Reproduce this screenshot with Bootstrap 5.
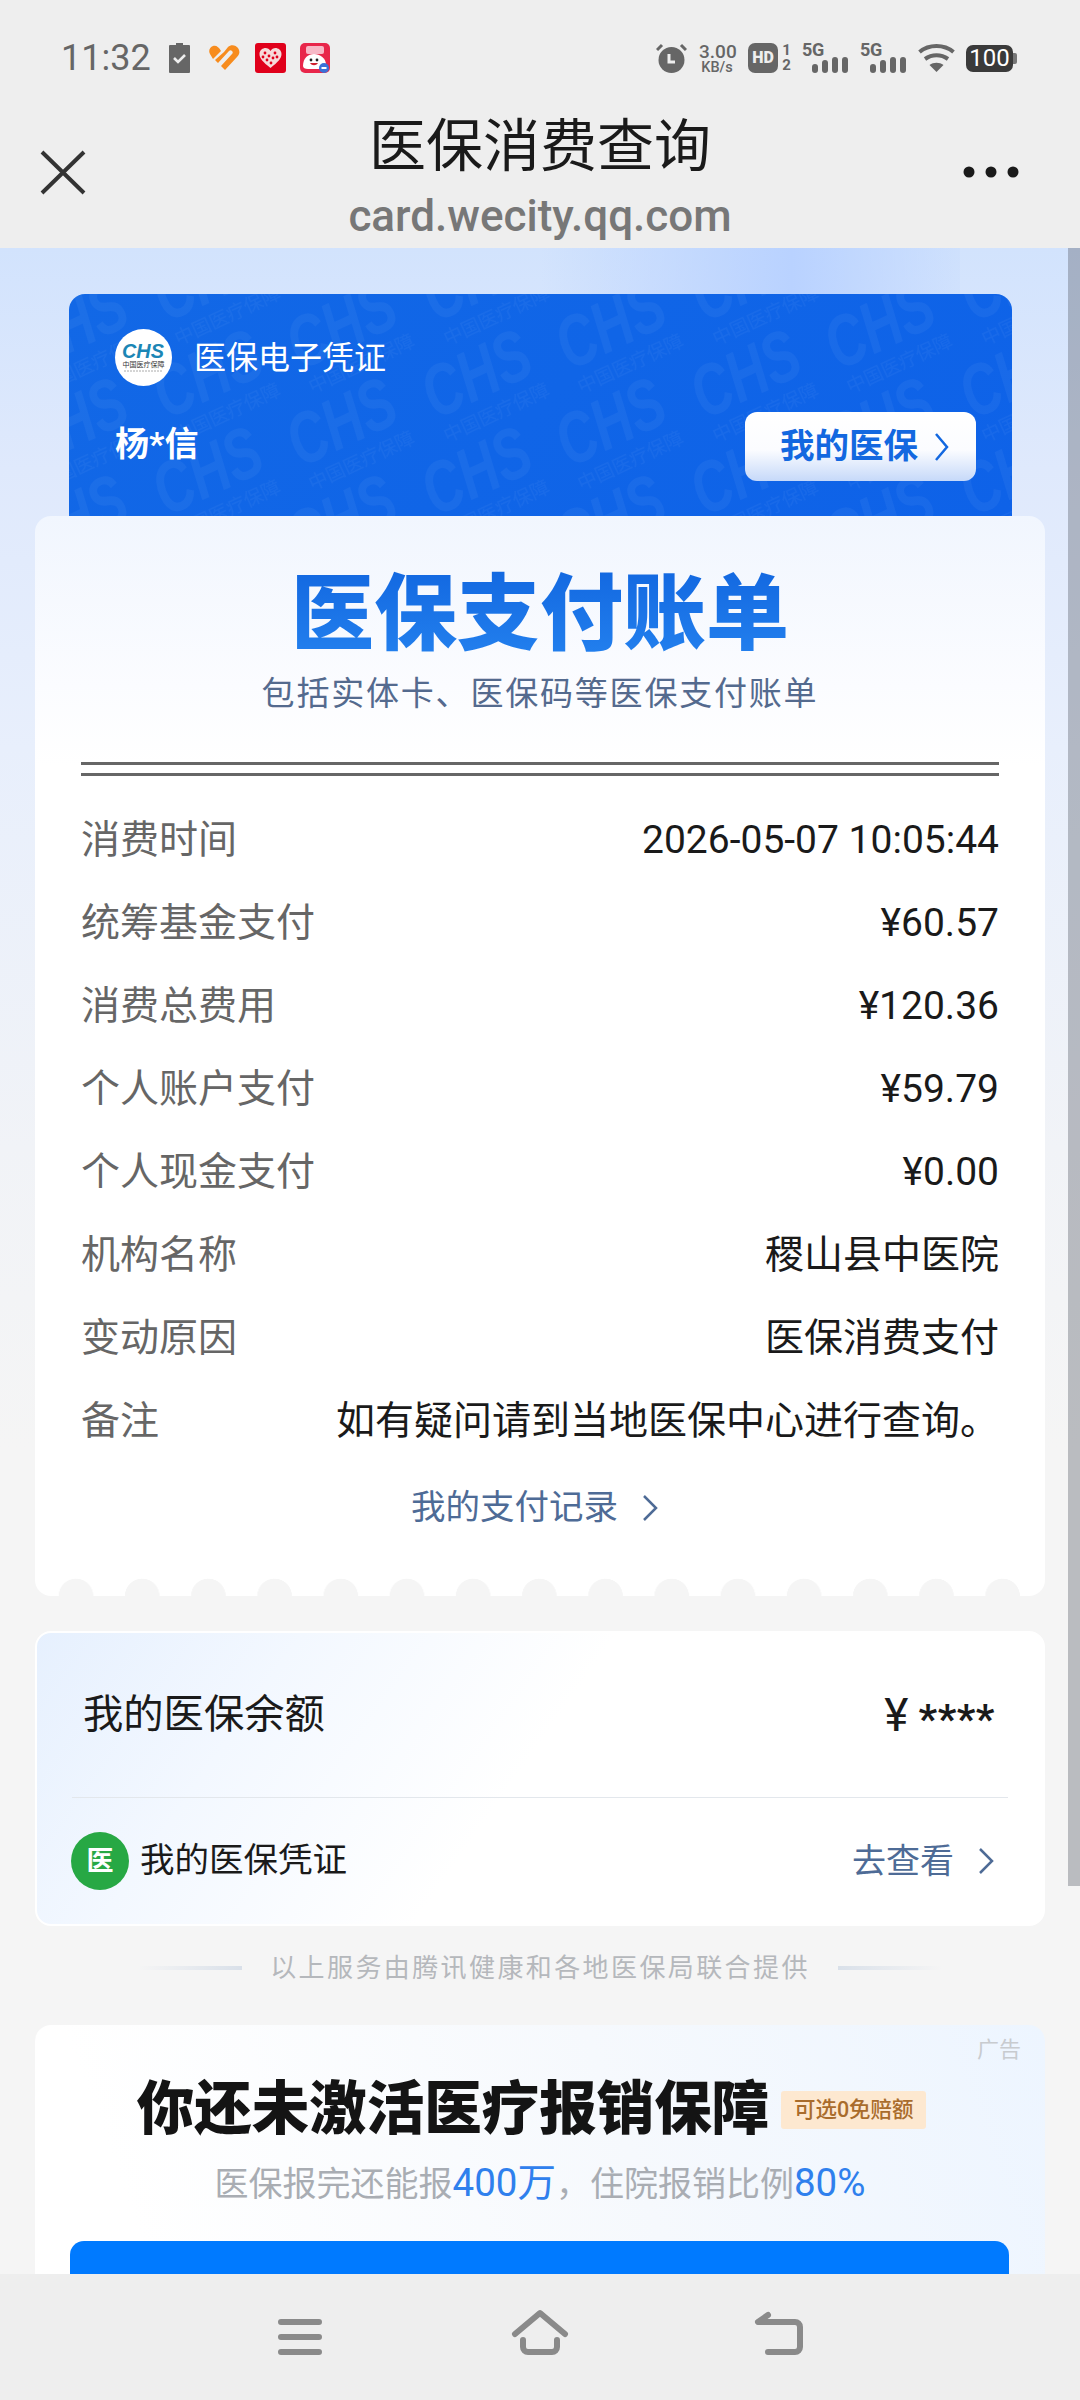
<!DOCTYPE html>
<html lang="zh-CN">
<head>
<meta charset="utf-8">
<title>医保消费查询</title>
<link href="https://cdn.jsdelivr.net/npm/bootstrap@5.3.0/dist/css/bootstrap.min.css" rel="stylesheet">
<style>
html,body{margin:0;background:#eee}
body{width:1080px;height:2400px;overflow:hidden;font-family:Roboto,"Noto Sans CJK SC",sans-serif;position:relative}
.phone{width:1080px;height:2400px}
.top-area{background:#eee;height:248px;flex:none}
.status-row{height:100px;padding:28px 63px 0 61px;color:#666}
.clock{font-size:36px;line-height:40px;color:#666;width:89px}
.m-19{margin-left:19px}.m-15{margin-left:15px}.m-14{margin-left:14px}.m-13{margin-left:13px}.m-11{margin-left:11px}.m-12{margin-left:12px}.m-10{margin-left:10px}
.speed{width:36px;font-weight:500;color:#666;text-align:center}
.speed-a{font-size:19px;line-height:17px}
.speed-b{font-size:14.5px;line-height:13px;margin-top:1px}
.hd-box{width:30px;height:30px;background:#666;border-radius:7px;color:#eee;font-size:16px;font-weight:900;line-height:30px;text-align:center}
.hd-sim{width:11px;margin-left:3px;font-size:15px;font-weight:700;color:#666;line-height:15px;text-align:center}
.net-box{width:46px;height:30px;flex:none}
.net-label{font-size:18px;font-weight:700;line-height:14px;height:14px;color:#666;letter-spacing:-.3px}
.net-box svg{display:block}
.batt{width:47px;height:27px;position:relative;background:#3a3a3a;border-radius:7px;margin-right:3px;color:#fff;font-size:24px;line-height:27px;text-align:center}
.batt-nub{width:4px;height:11px;background:#777;border-radius:0 2px 2px 0;flex:none}
.head-row{height:148px}
.side-box{width:120px;flex:none;height:148px}
.head-mid{padding-top:12px}
.head-title{font-size:57px;line-height:70px;color:#1a1a1a;text-align:center}
.head-sub{font-size:44px;line-height:50px;color:#777;margin-top:9px;text-align:center;font-weight:500}
.content-area{flex:1 1 auto;min-height:0;overflow:hidden;background:linear-gradient(180deg,#d2e3fd 0,#dfe9fc 220px,#e8effc 500px,#f1f3f7 900px,#f5f5f5 1200px);position:relative}
.glow{position:absolute;left:540px;top:0;width:420px;height:46px;background:linear-gradient(90deg,rgba(180,208,255,0),#b9d2ff 60%,rgba(190,214,255,.2));}
.blue-card{position:relative;margin:46px 68px 0 69px;height:222px;border-radius:16px 16px 0 0;background:linear-gradient(135deg,#1268e6,#0e62e8);overflow:hidden;color:#fff}
.wm{position:absolute;left:0;top:0;width:100%;height:100%}
.blue-in{position:relative;padding:35px 36px 0 46px}
.logo-disc{width:57px;height:57px;flex:none}
.blue-name{font-size:32px;line-height:54px;margin-left:22px;color:#fff}
.blue-second{margin-top:26px}
.person{font-size:34px;font-weight:700;line-height:44px;margin-top:10px}
.my-btn{width:231px;height:69px;border:0;border-radius:12px;background:linear-gradient(180deg,#fff 0,#fbfcff 55%,#c6d9f9 100%);color:#1368e0;font-size:34.5px;font-weight:700;padding:0 26px 0 35px}
.bill-card{margin:0 35px;height:1080px;border-radius:16px;background:linear-gradient(180deg,#f1f6fe 0,#fbfcff 170px,#fff 250px);padding-top:49px}
.bill-title{font-size:83px;line-height:100px;font-weight:900;text-align:center;background:linear-gradient(180deg,#1267e0,#2482ef);-webkit-background-clip:text;background-clip:text;color:transparent}
.bill-sub{font-size:33px;line-height:48px;letter-spacing:1.8px;color:#546a8e;text-align:center;margin-top:5px}
.bill-rule{margin:44px 46px 0;height:14px;border-top:3px solid #666;border-bottom:3px solid #666}
.bill-rows{margin:23px 46px 0}
.bill-line{height:83px;font-size:39px}
.bill-key{color:#666}
.bill-val{color:#1a1a1a}
.rec-link{height:50px;margin-top:20px;font-size:34.5px;color:#4e6b96;padding-right:10px}
.scallop{height:18px;background-image:radial-gradient(circle at 33px 18px,#f5f5f5 17px,rgba(245,245,245,0) 17.6px);background-size:66.2px 18px;background-position:8px 0;background-repeat:repeat-x}
.bal-card{margin:35px 35px 0;height:295px;border:2px solid #fff;border-radius:16px;background:linear-gradient(125deg,#e6f0fe 0,#f3f8ff 22%,#fff 48%)}
.bal-top{height:164px;padding:0 48px 0 46px;font-size:40.3px;color:#1a1a1a}
.yen-sign{font-size:46px;margin-right:10px}
.stars{font-size:41px;font-weight:700;letter-spacing:.5px;line-height:30px;padding-top:8px}
.bal-line{height:1px;background:#e3e7ec;margin:0 35px}
.bal-bot{height:126px;padding:0 48px 0 34px}
.green-disc{width:58px;height:58px;border-radius:50%;background:#27a844;color:#fff;font-size:27px;font-weight:700;flex:none}
.cert-name{font-size:34.5px;color:#1a1a1a;margin-left:11px}
.go-see{font-size:34px;color:#4e6b96}
.foot-row{height:84px;color:#b5b8bc;font-size:26px;letter-spacing:2.4px}
.foot-bar{width:104px;height:4px;flex:none}
.foot-l{background:linear-gradient(90deg,rgba(222,228,236,0),#d9e0e9);margin-right:28px}
.foot-r{background:linear-gradient(90deg,#d9e0e9,rgba(222,228,236,0));margin-left:28px}
.ad-card{margin:15px 35px 0;height:400px;border-radius:16px;background:linear-gradient(70deg,#fff 15%,#f6f9fd 60%,#edf5ff 100%);padding-top:10px}
.ad-mark{font-size:22px;line-height:30px;color:#c8cbcf;text-align:right;padding-right:24px}
.ad-head{margin-top:10px;height:70px;padding-right:17px}
.ad-title{font-size:57.500px;line-height:70px;font-weight:900;color:#141414}
.ad-tag{margin-left:12px;width:145px;height:38px;background:#fde8d0;color:#a96c2c;font-size:21.5px;font-weight:500;border-radius:3px}
.ad-sub{margin-top:13px;font-size:34px;line-height:50px;color:#a9adb3;text-align:center}
.ad-sub span{color:#2f80ed;font-size:38.500px}
.ad-btn{display:block;width:939px;margin:32px 0 0 35px;height:110px;border:0;border-radius:14px;background:#007aff;color:#fff;font-size:50px;font-weight:700;line-height:60px;padding:21px 0 0}
.bot-bar{height:126px;background:#eee;flex:none}
.scroll-thumb{position:absolute;left:1068px;top:248px;width:12px;height:1638px;background:rgba(90,95,105,.38)}
</style>
</head>
<body>
<div class="phone d-flex flex-column">
  <div class="top-area">
    <div class="status-row d-flex align-items-start">
      <div class="d-flex align-items-center" style="height:60px">
        <span class="clock">11:32</span>
        <svg class="m-19" width="21" height="30" viewBox="0 0 21 30"><path d="M7 0h7v2h6a1 1 0 0 1 1 1v26a1 1 0 0 1-1 1H1a1 1 0 0 1-1-1V3a1 1 0 0 1 1-1h6z" fill="#666"/><path d="M5 15l4 4 7-7" fill="none" stroke="#eee" stroke-width="2.6"/></svg>
        <svg class="m-19" width="31" height="26" viewBox="0 0 31 26"><path d="M15 7l4-5c3-3 8-2 10 1s2 6-1 9L16 25l-4-4 11-12c1-1 1-2 0-3s-2-1-3 0L9 18l-3-3 9-8zM12 6L4 14 1 9c-2-3 0-7 3-8 3-1 6 1 8 5z" fill="#f78c1e"/></svg>
        <svg class="m-15" width="31" height="30" viewBox="0 0 31 30"><rect width="31" height="30" rx="3" fill="#e0001b"/><path d="M15.5 25C8 19 4.5 15.500 4.500 11 4.500 7 8 5 10.500 5c2 0 4 1 5 3 1-2 3-3 5-3C23 5 26.500 7 26.500 11c0 4.500-3.500 8-11 14z" fill="#f6dada"/><g fill="#e0001b"><circle cx="10" cy="10" r="1.400"/><circle cx="14" cy="13" r="1.400"/><circle cx="20" cy="10" r="1.400"/><circle cx="18" cy="15" r="1.400"/><circle cx="12" cy="17" r="1.400"/><circle cx="16" cy="20" r="1.400"/><circle cx="22" cy="14" r="1.400"/><circle cx="8" cy="14" r="1.400"/></g></svg>
        <svg class="m-14" width="30" height="30" viewBox="0 0 30 30"><rect width="30" height="30" rx="5" fill="#e8264a"/><rect x="6" y="3" width="18" height="8" rx="2" fill="#f7b8c6"/><path d="M3 23c0-8 5-12 11-12s12 4 12 11c0 3-2 4-5 4H8c-3 0-5-1-5-3z" fill="#fff"/><circle cx="11" cy="17" r="1.400" fill="#222"/><circle cx="17" cy="17" r="1.400" fill="#222"/><path d="M10 20c2 3 6 3 8 0z" fill="#d0202e"/><circle cx="24" cy="25" r="5" fill="#3a70d8"/><rect x="21.500" y="24" width="5" height="2" fill="#fff"/></svg>
      </div>
      <div class="ms-auto d-flex align-items-center" style="height:60px">
        <svg width="31" height="30" viewBox="0 0 31 30"><circle cx="15.500" cy="17" r="13" fill="#666"/><path d="M1 7l5-5M30 7l-5-5" stroke="#666" stroke-width="3"/><path d="M13 11v8h6" stroke="#eee" stroke-width="3" fill="none"/></svg>
        <div class="speed m-12"><div class="speed-a">3.00</div><div class="speed-b">KB/s</div></div>
        <div class="hd-box m-13">HD</div>
        <div class="hd-sim"><div>1</div><div>2</div></div>
        <div class="net-box m-10"><div class="net-label">5G</div><svg width="46" height="16" viewBox="0 14 46 16"><g fill="#666"><rect x="10" y="21" width="6" height="9" rx="3"/><rect x="20" y="17" width="6" height="13" rx="3"/><rect x="30" y="14" width="6" height="16" rx="3"/><rect x="40" y="14" width="6" height="16" rx="3"/></g></svg></div>
        <div class="net-box m-12"><div class="net-label">5G</div><svg width="46" height="16" viewBox="0 14 46 16"><g fill="#666"><rect x="10" y="21" width="6" height="9" rx="3"/><rect x="20" y="17" width="6" height="13" rx="3"/><rect x="30" y="14" width="6" height="16" rx="3"/><rect x="40" y="14" width="6" height="16" rx="3"/></g></svg></div>
        <svg class="m-12" width="37" height="28" viewBox="0 0 37 28"><g fill="none" stroke="#666" stroke-width="4"><path d="M1.500 8C11 0 26 0 35.500 8"/><path d="M7 15c7-5 16-5 23 0"/></g><path d="M18.500 28l-7-7c4-3 10-3 14 0z" fill="#666"/></svg>
        <div class="batt m-11">100</div>
        <div class="batt-nub" style="margin-left:-3px"></div>
      </div>
    </div>
    <div class="head-row d-flex">
      <div class="side-box">
        <svg width="120" height="148" viewBox="0 0 120 148"><path d="M42 52l42 41M84 52L42 93" stroke="#333" stroke-width="4" fill="none"/></svg>
      </div>
      <div class="head-mid flex-grow-1">
        <div class="head-title">医保消费查询</div>
        <div class="head-sub">card.wecity.qq.com</div>
      </div>
      <div class="side-box">
        <svg width="120" height="148" viewBox="0 0 120 148"><g fill="#1a1a1a"><circle cx="9" cy="72" r="5.500"/><circle cx="31" cy="72" r="5.500"/><circle cx="53" cy="72" r="5.500"/></g></svg>
      </div>
    </div>
  </div>

  <div class="content-area">
    <div class="glow"></div>
    <div class="blue-card">
      <svg class="wm" viewBox="0 0 943 222" aria-hidden="true">
        <defs>
          <g id="wmk" transform="rotate(-25)"><text x="-55" y="6" font-family="Liberation Sans" font-size="72" font-weight="700" font-style="italic" fill="#fff" fill-opacity=".045" textLength="112" lengthAdjust="spacingAndGlyphs">CHS</text><text x="-54" y="32" font-family="Noto Sans CJK SC" font-size="19" fill="#fff" fill-opacity=".04">中国医疗保障</text></g>
          <pattern id="wmp" width="269" height="97" patternUnits="userSpaceOnUse">
            <use href="#wmk" transform="translate(10 48)"/>
            <use href="#wmk" transform="translate(279 48)"/>
            <use href="#wmk" transform="translate(145 0)"/>
            <use href="#wmk" transform="translate(145 97)"/>
            <use href="#wmk" transform="translate(-125 0)"/>
            <use href="#wmk" transform="translate(-125 97)"/>
            <use href="#wmk" transform="translate(10 145)"/>
            <use href="#wmk" transform="translate(279 145)"/>
            <use href="#wmk" transform="translate(10 -49)"/>
            <use href="#wmk" transform="translate(279 -49)"/>
          </pattern>
        </defs>
        <rect width="943" height="222" fill="url(#wmp)"/>
      </svg>
      <div class="blue-in">
        <div class="d-flex align-items-center">
          <svg class="logo-disc" viewBox="0 0 57 57"><circle cx="28.500" cy="28.500" r="28.500" fill="#fff"/><text x="7" y="29" font-family="Liberation Sans" font-size="20" font-weight="700" font-style="italic" fill="#1b86b5" textLength="42" lengthAdjust="spacingAndGlyphs">CHS</text><text x="7.500" y="38" font-family="Noto Sans CJK SC" font-size="7" fill="#333" textLength="42" lengthAdjust="spacingAndGlyphs">中国医疗保障</text><path d="M9 42h39" stroke="#aaa" stroke-width="1" stroke-dasharray="2 1"/></svg>
          <span class="blue-name">医保电子凭证</span>
        </div>
        <div class="d-flex justify-content-between align-items-start blue-second">
          <span class="person">杨*信</span>
          <button class="my-btn d-flex align-items-center justify-content-between" type="button"><span>我的医保</span>
            <svg width="17" height="30" viewBox="0 0 17 30"><path d="M3 2l11 13L3 28" fill="none" stroke="#1368e0" stroke-width="2.500"/></svg></button>
        </div>
      </div>
    </div>

    <div class="bill-card d-flex flex-column">
      <div class="bill-title">医保支付账单</div>
      <div class="bill-sub">包括实体卡、医保码等医保支付账单</div>
      <div class="bill-rule"></div>
      <div class="bill-rows">
        <div class="bill-line d-flex justify-content-between align-items-center"><span class="bill-key">消费时间</span><span class="bill-val">2026-05-07 10:05:44</span></div>
        <div class="bill-line d-flex justify-content-between align-items-center"><span class="bill-key">统筹基金支付</span><span class="bill-val">¥60.57</span></div>
        <div class="bill-line d-flex justify-content-between align-items-center"><span class="bill-key">消费总费用</span><span class="bill-val">¥120.36</span></div>
        <div class="bill-line d-flex justify-content-between align-items-center"><span class="bill-key">个人账户支付</span><span class="bill-val">¥59.79</span></div>
        <div class="bill-line d-flex justify-content-between align-items-center"><span class="bill-key">个人现金支付</span><span class="bill-val">¥0.00</span></div>
        <div class="bill-line d-flex justify-content-between align-items-center"><span class="bill-key">机构名称</span><span class="bill-val">稷山县中医院</span></div>
        <div class="bill-line d-flex justify-content-between align-items-center"><span class="bill-key">变动原因</span><span class="bill-val">医保消费支付</span></div>
        <div class="bill-line d-flex justify-content-between align-items-center"><span class="bill-key">备注</span><span class="bill-val">如有疑问请到当地医保中心进行查询。</span></div>
      </div>
      <div class="rec-link d-flex justify-content-center align-items-center gap-4"><span>我的支付记录</span>
        <svg width="17" height="28" viewBox="0 0 17 28"><path d="M2 2l12 12L2 26" fill="none" stroke="#4e6b96" stroke-width="2.500"/></svg></div>
      <div class="scallop mt-auto"></div>
    </div>

    <div class="bal-card">
      <div class="bal-top d-flex justify-content-between align-items-center">
        <span>我的医保余额</span>
        <span class="d-flex align-items-center"><span class="yen-sign">¥</span><span class="stars">****</span></span>
      </div>
      <div class="bal-line"></div>
      <div class="bal-bot d-flex align-items-center">
        <div class="green-disc d-flex align-items-center justify-content-center">医</div>
        <span class="cert-name">我的医保凭证</span>
        <span class="go-see ms-auto d-flex align-items-center gap-4"><span>去查看</span>
          <svg width="17" height="28" viewBox="0 0 17 28"><path d="M2 2l12 12L2 26" fill="none" stroke="#4e6b96" stroke-width="2.500"/></svg></span>
      </div>
    </div>

    <div class="foot-row d-flex justify-content-center align-items-center">
      <span class="foot-bar foot-l"></span><span>以上服务由腾讯健康和各地医保局联合提供</span><span class="foot-bar foot-r"></span>
    </div>

    <div class="ad-card">
      <div class="ad-mark">广告</div>
      <div class="ad-head d-flex justify-content-center align-items-center">
        <span class="ad-title">你还未激活医疗报销保障</span>
        <span class="ad-tag d-flex align-items-center justify-content-center">可选0免赔额</span>
      </div>
      <div class="ad-sub">医保报完还能报<span>400万</span>，住院报销比例<span>80%</span></div>
      <button class="ad-btn" type="button">立即激活</button>
    </div>
  </div>

  <div class="bot-bar">
    <svg width="1080" height="126" viewBox="0 0 1080 126"><g fill="none" stroke="#8a8a8a" stroke-width="6" stroke-linecap="round" stroke-linejoin="round"><path d="M281 48h38M281 63h38M281 78h38"/><path d="M515 60l25-21 25 21"/><path d="M523 66v7a5 5 0 0 0 5 5h24a5 5 0 0 0 5-5v-7"/><path d="M768 41l-10 7h37a5 5 0 0 1 5 5v20a5 5 0 0 1-5 5h-27"/></g></svg>
  </div>
</div>
<div class="scroll-thumb"></div>
<script src="https://cdn.jsdelivr.net/npm/bootstrap@5.3.0/dist/js/bootstrap.bundle.min.js"></script>
</body>
</html>
